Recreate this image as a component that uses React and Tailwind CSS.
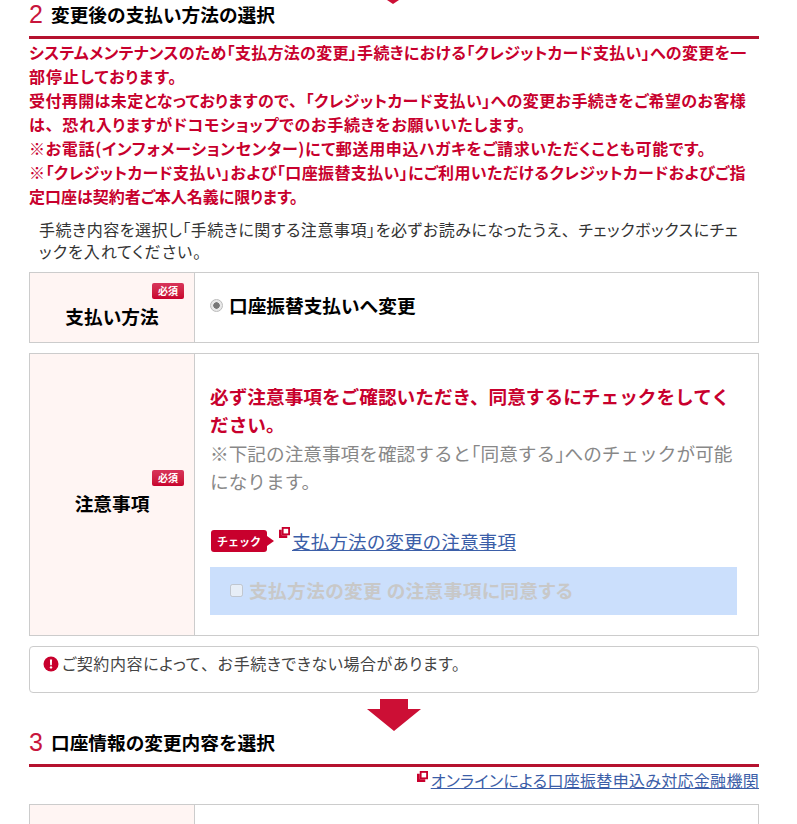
function ExternalIcon({ className }) {
  return (
    <svg viewBox="0 0 12 12" className={className} aria-hidden="true">
      <path d="M0 3h3v6h6v3H0z" fill="#c8002d" />
      <path d="M3 0h9v9H3z" fill="#c8002d" />
      <path d="M5 2h5v5H5z" fill="#fff" />
    </svg>
  );
}

function Bracket({ children }) {
  return <span className="[font-feature-settings:'halt']">{children}</span>;
}

// full width 、 inside the palt lines
function Comma() {
  return <span className="[font-feature-settings:normal]">、</span>;
}

function SectionTitle({ num, children }) {
  return (
    <div className="flex h-[39px] items-center gap-[10px] border-b-[3px] border-[#b5122f] pb-[7px]">
      <span className="w-[12px] text-[25px] leading-none text-[#c8153c] [font-family:'Liberation_Sans',sans-serif]">{num}</span>
      <h2 className="text-[18.67px] font-bold leading-none text-black">{children}</h2>
    </div>
  );
}

const badge = "flex h-[16px] w-[32px] items-center justify-center rounded-[2px] bg-gradient-to-b from-[#d8345a] to-[#c8002d] text-[10px] font-bold leading-none text-white";

export default function App() {
  return (
    <div className="h-[824px] w-[797px] overflow-hidden bg-white text-[16px] text-[#333] [font-family:'Noto_Sans_CJK_JP',sans-serif]">
      <div className="relative ml-[29px] w-[730px]">
        <svg viewBox="0 0 12 4" className="absolute left-[358px] top-0 h-[4px] w-[12px]">
          <path d="M0 0h12L6 4z" fill="#cc0f35" />
        </svg>

        <SectionTitle num="2">変更後の支払い方法の選択</SectionTitle>

        <div className="mt-[1px] whitespace-nowrap text-[16px] font-bold leading-[24px] text-[#c8002d] [font-feature-settings:'palt']">
          <p className="tracking-[0.3px]">システムメンテナンスのため「支払方法の変更」手続きにおける「クレジットカード支払い」への変更を一</p>
          <p className="tracking-[1px]">部停止しております。</p>
          <p className="tracking-[0.4px]">受付再開は未定となっておりますので<Comma />「クレジットカード支払い」への変更お手続きをご希望のお客様</p>
          <p className="tracking-[0.75px]">は<Comma />恐れ入りますがドコモショップでのお手続きをお願いいたします。</p>
          <p className="tracking-[0.67px]">※お電話(インフォメーションセンター)にて郵送用申込ハガキをご請求いただくことも可能です。</p>
          <p className="tracking-[0.39px]">※「クレジットカード支払い」および「口座振替支払い」にご利用いただけるクレジットカードおよびご指</p>
          <p>定口座は契約者ご本人名義に限ります。</p>
        </div>

        <div className="mt-[10px] whitespace-nowrap pl-[10px] text-[16px] leading-[22px] text-[#333] [font-feature-settings:'palt']">
          <p className="tracking-[0.55px]">手続き内容を選択し「手続きに関する注意事項」を必ずお読みになったうえ<Comma />チェックボックスにチェ</p>
          <p className="tracking-[1px]">ックを入れてください。</p>
        </div>

        <div className="mt-[10px] flex h-[71px] border border-[#ccc]">
          <div className="relative flex w-[165px] shrink-0 items-center justify-center border-r border-[#ccc] bg-[#fff5f3] pt-[16px]">
            <span className={`absolute right-[10px] top-[10px] ${badge}`}>必須</span>
            <span className="text-[18.67px] font-bold text-black">支払い方法</span>
          </div>
          <label className="flex items-start gap-[6px] pl-[15px] pt-[18px] text-[18.67px] font-bold leading-[28px] text-black">
            <input
              type="radio"
              checked
              disabled
              readOnly
              className="mt-[8px] h-[13px] w-[13px] appearance-none rounded-full border border-[#bbb] bg-[radial-gradient(circle,#777_0,#777_38%,#e8e8e8_45%)]"
            />
            口座振替支払いへ変更
          </label>
        </div>

        <div className="mt-[10px] flex h-[283px] border border-[#ccc]">
          <div className="relative flex w-[165px] shrink-0 items-center justify-center border-r border-[#ccc] bg-[#fff5f3] pt-[16px]">
            <span className={`absolute right-[10px] top-[116px] ${badge}`}>必須</span>
            <span className="text-[18.67px] font-bold text-black">注意事項</span>
          </div>
          <div className="min-w-0 flex-1 pl-[15px] pr-[21px] pt-[28px]">
            <p className="text-[18.67px] font-bold leading-[28px] text-[#c8002d]">
              必ず注意事項をご確認いただき、同意するにチェックをしてく<br />
              ださい。
            </p>
            <p className="mt-[1px] text-[18.67px] leading-[28px] text-[#888]">
              ※下記の注意事項を確認すると<Bracket>「</Bracket>同意する<Bracket>」</Bracket>へのチェックが可能<br />
              になります。
            </p>
            <div className="mt-[32px] flex h-[28px] items-center">
              <span className="relative ml-[1px] flex h-[22px] w-[56px] items-center justify-center rounded-[3px] bg-[#c8002d] text-[11px] font-bold leading-none text-white">
                チェック
                <span className="absolute left-full top-[6px] h-0 w-0 border-y-[5px] border-l-[7px] border-y-transparent border-l-[#c8002d]" />
              </span>
              <ExternalIcon className="mb-[18px] ml-[12px] h-[11px] w-[11px] shrink-0" />
              <a href="#" className="ml-[2px] text-[18.67px] leading-[28px] text-[#3b5ea8] underline">支払方法の変更の注意事項</a>
            </div>
            <label className="mt-[12px] flex h-[48px] items-center gap-[6px] bg-[#cbdffc] pb-[2px] pl-[20px] text-[18.67px] font-bold tracking-[0.4px] text-[#c8c8c8] [font-feature-settings:'palt']">
              <input type="checkbox" disabled className="h-[13px] w-[13px]" />
              支払方法の変更 の注意事項に同意する
            </label>
          </div>
        </div>

        <div className="mt-[10px] flex h-[47px] items-start gap-[3px] rounded-[4px] border border-[#ccc] pl-[13px] pt-[4px] text-[16px] leading-[24px] tracking-[0.6px] text-[#444] [font-feature-settings:'palt']">
          <svg viewBox="0 0 16 16" className="mt-[5px] h-[16px] w-[16px] shrink-0" aria-hidden="true">
            <circle cx="8" cy="8" r="7.5" fill="#c8002d" />
            <path d="M6.9 3.5h2.2l-.3 5.8H7.2z" fill="#fff" />
            <circle cx="8" cy="11.4" r="1.2" fill="#fff" />
          </svg>
          <span>ご契約内容によって<Comma />お手続きできない場合があります。</span>
        </div>

        <svg viewBox="0 0 54 32" className="mx-auto mt-[6px] h-[32px] w-[54px]" aria-hidden="true">
          <path d="M13 0h28v10h13L27 32 0 10h13z" fill="#cc0f35" />
        </svg>

        <div className="mt-[-3px]">
          <SectionTitle num="3">口座情報の変更内容を選択</SectionTitle>
        </div>

        <div className="flex h-[26px] items-center justify-end">
          <ExternalIcon className="mb-[8px] mr-[3px] h-[11px] w-[11px] shrink-0" />
          <a href="#" className="text-[16px] leading-[22px] tracking-[0.3px] text-[#3b5ea8] underline [font-feature-settings:'palt']">オンラインによる口座振替申込み対応金融機関</a>
        </div>

        <div className="mt-[11px] flex h-[80px] border border-[#ccc]">
          <div className="w-[165px] shrink-0 border-r border-[#ccc] bg-[#fff5f3]" />
        </div>
      </div>
    </div>
  );
}
